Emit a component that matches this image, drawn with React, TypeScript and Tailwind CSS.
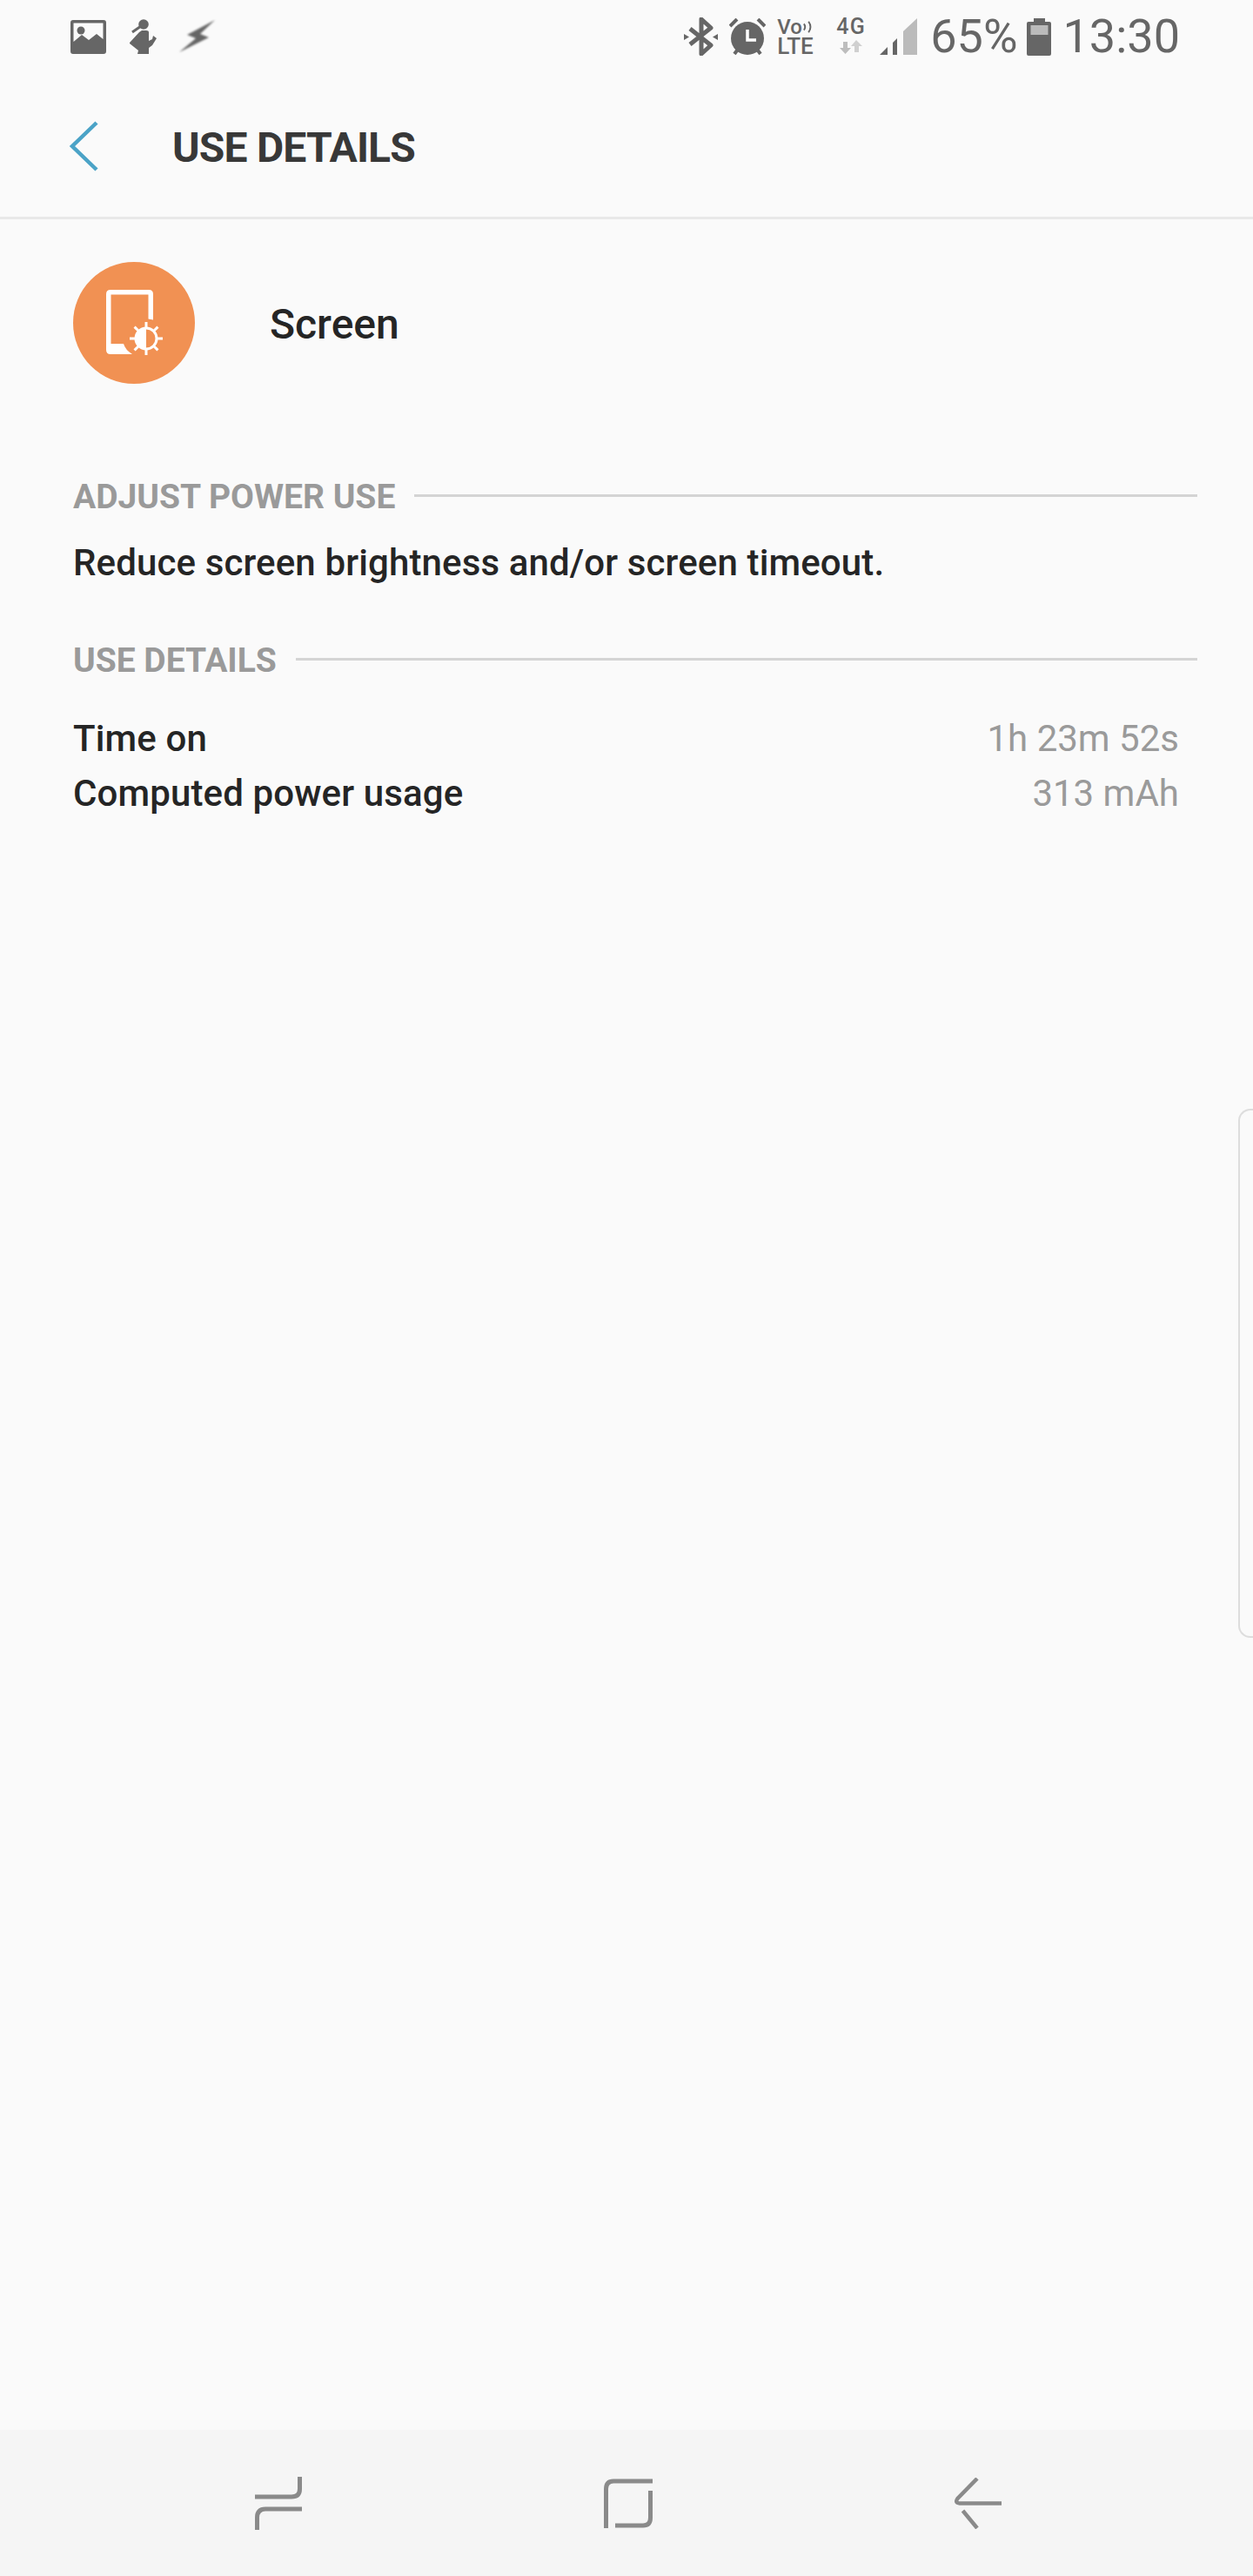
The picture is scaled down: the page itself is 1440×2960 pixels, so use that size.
const roboto = "font-['Roboto',sans-serif]";

function PictureIcon() {
    return (
        <svg width="41" height="39" viewBox="0 0 41 39" className="block">
            <path
                fillRule="evenodd"
                fill="#666"
                d="M3 0H38Q41 0 41 3V36Q41 39 38 39H3Q0 39 0 36V3Q0 0 3 0ZM3.5 3.5V25L13 17L21 23L30 16L37.5 22V3.5Z"
            />
            <circle cx="12" cy="12" r="4.5" fill="#666" />
        </svg>
    );
}

function FitnessIcon() {
    return (
        <svg width="32" height="40" viewBox="0 0 32 40" className="block">
            <circle cx="17" cy="6" r="5.8" fill="#666" />
            <path d="M14 8L4 15" fill="none" stroke="#666" strokeWidth="3" />
            <path
                fill="#666"
                d="M12 15L1 27V28L11 36L10 40H23V33L27 30L32 22L28 19L27 23L23 25V15Q23 13 20 13H15Z"
            />
        </svg>
    );
}

function BoltIcon() {
    return (
        <svg width="42" height="38" viewBox="0 0 42 38" className="block blur-[1px]">
            <path fill="#666" d="M41 0L9 17L19 21L0 37L34 20L24 16Z" />
        </svg>
    );
}

function BluetoothIcon() {
    return (
        <svg width="39" height="44" viewBox="0 0 39 44" className="block">
            <path
                d="M7 13L31 32L20 42V2L31 12L7 31"
                fill="none"
                stroke="#666"
                strokeWidth="5"
                strokeLinejoin="round"
            />
            <path fill="#666" d="M0 19L6 22.5L0 26ZM39 19L33 22.5L39 26Z" />
        </svg>
    );
}

function AlarmIcon() {
    return (
        <svg width="42" height="43" viewBox="0 0 42 43" className="block">
            <circle cx="21" cy="23" r="19" fill="#666" />
            <path d="M21 13V25H31" fill="none" stroke="#fff" strokeWidth="3.5" />
            <path d="M1 9L9 1M33 1L41 9M6 41L9 37M36 41L33 37" stroke="#666" strokeWidth="4" />
        </svg>
    );
}

function VolteIcon() {
    return (
        <div className="flex flex-col w-[42px] text-[#666]">
            <div className="flex items-center h-[18px] mb-[5px]">
                <span className="text-[24px] leading-[18px] font-medium">Vo</span>
                <svg width="14" height="18" viewBox="0 0 14 18" className="block ml-[1px]">
                    <path
                        d="M1 5Q4 9 1 13M7 2Q12 9 7 16"
                        fill="none"
                        stroke="#666"
                        strokeWidth="2.2"
                    />
                </svg>
            </div>
            <span className="text-[26px] leading-[17px] font-medium">LTE</span>
        </div>
    );
}

function NetworkIcon() {
    return (
        <div className="flex flex-col items-center w-[34px] text-[#666]">
            <span className="text-[25px] leading-[17px] font-medium tracking-[1.5px] mb-[7px]">4G</span>
            <svg width="26" height="16" viewBox="0 0 26 16" className="block">
                <path fill="#bdbdbd" d="M4 2H9V9H13L6.5 16L0 9H4Z" />
                <path fill="#d0d0d0" d="M19 0L26 7H22V14H17V7H13Z" />
            </svg>
        </div>
    );
}

function SignalIcon() {
    return (
        <svg width="43" height="42" viewBox="0 0 43 42" className="block">
            <path fill="#666" d="M0 42L9 33V42ZM15 42V28L20 23V42Z" />
            <path fill="#bbb" d="M27 42V15L43 0V42Z" />
        </svg>
    );
}

function BatteryIcon() {
    return (
        <svg width="28" height="43" viewBox="0 0 28 43" className="block">
            <path
                fill="#666"
                d="M8 0H21V4H26Q28 4 28 6V41Q28 43 26 43H2Q0 43 0 41V6Q0 4 2 4H8Z"
            />
            <rect x="4.5" y="8" width="20" height="11" fill="#bbb" />
        </svg>
    );
}

function ScreenIcon() {
    const rays = [0, 45, 90, 135, 180, 225, 270, 315];

    return (
        <svg width="140" height="140" viewBox="0 0 140 140" className="block">
            <path
                fill="#fff"
                d="M92 66.5V37Q92 32 87 32H43Q38 32 38 37V101Q38 106 43 106H68Q60 101 58 94H43.5V37.5H86.5V65.5Z"
            />
            {rays.map((angle) => (
                <rect
                    key={angle}
                    x="82.5"
                    y="69"
                    width="3"
                    height="8"
                    fill="#fff"
                    transform={`rotate(${angle} 84 88)`}
                />
            ))}
            <circle cx="84" cy="88" r="12" fill="#f19153" stroke="#fff" strokeWidth="3" />
            <path fill="#fff" d="M84 76A12 12 0 0 0 84 100Z" />
        </svg>
    );
}

function SectionHeader({ title }: { title: string }) {
    return (
        <div className="flex items-center h-[40px] pr-[64px]">
            <span className="text-[39px] leading-[40px] font-bold text-[#9a9a9a] whitespace-nowrap">{title}</span>
            <div className="flex-1 h-[3px] ml-[22px] mb-[3px] bg-[#d4d4d4]" />
        </div>
    );
}

function DetailRow({ label, value }: { label: string; value: string }) {
    return (
        <div className="flex justify-between items-center h-[63px] pr-[85px]">
            <span className="text-[42px] leading-[50px] font-medium tracking-[0.13px] text-[#252525]">{label}</span>
            <span className="text-[42px] leading-[50px] text-[#9a9a9a]">{value}</span>
        </div>
    );
}

export default function App() {
    return (
        <div className={`relative flex flex-col w-[1440px] h-[2960px] bg-[#fafafa] ${roboto}`}>
            <div className="flex items-center justify-between h-[84px] pl-[81px] pr-[84px]">
                <div className="flex items-center gap-[26px]">
                    <PictureIcon />
                    <FitnessIcon />
                    <BoltIcon />
                </div>
                <div className="flex items-center">
                    <BluetoothIcon />
                    <div className="ml-[13px]"><AlarmIcon /></div>
                    <div className="ml-[13px]"><VolteIcon /></div>
                    <div className="ml-[26px]"><NetworkIcon /></div>
                    <div className="ml-[16px]"><SignalIcon /></div>
                    <span className="ml-[15px] text-[54px] leading-[50px] text-[#666]">65%</span>
                    <div className="ml-[10px]"><BatteryIcon /></div>
                    <span className="ml-[14px] text-[54px] leading-[50px] text-[#666]">13:30</span>
                </div>
            </div>

            <div className="flex items-center h-[162px] pt-[3px] border-b-[3px] border-[#e8e8e8] box-content pl-[79px]">
                <svg width="34" height="58" viewBox="0 0 34 58" className="block">
                    <path d="M32 2L4 29L32 56" fill="none" stroke="#4ba3c7" strokeWidth="4.5" />
                </svg>
                <h1 className="ml-[85px] mt-[4px] text-[48px] leading-[56px] font-bold tracking-[-0.8px] text-[#383838]">USE DETAILS</h1>
            </div>

            <div className="flex-1 pl-[84px] pt-[49px]">
                <div className="flex items-center">
                    <div className="w-[140px] h-[140px] rounded-full bg-[#f19153]">
                        <ScreenIcon />
                    </div>
                    <span className="ml-[86px] mt-[3px] text-[48px] leading-[56px] font-medium text-[#252525]">Screen</span>
                </div>

                <div className="mt-[110px]">
                    <SectionHeader title="ADJUST POWER USE" />
                </div>
                <p className="mt-[31px] text-[42px] leading-[50px] font-medium tracking-[0.13px] text-[#252525]">
                    Reduce screen brightness and/or screen timeout.
                </p>

                <div className="mt-[67px]">
                    <SectionHeader title="USE DETAILS" />
                </div>
                <div className="mt-[38px]">
                    <DetailRow label="Time on" value="1h 23m 52s" />
                    <DetailRow label="Computed power usage" value="313 mAh" />
                </div>
            </div>

            <div className="flex items-center justify-between h-[168px] pl-[293px] pr-[289px] bg-[#f5f5f5]">
                <svg width="54" height="61" viewBox="0 0 54 61" className="block">
                    <path
                        d="M51.5 0V14Q51.5 23 42 23H0M54 37H12Q2.5 37 2.5 47V61"
                        fill="none"
                        stroke="#8a8a8a"
                        strokeWidth="5"
                    />
                </svg>
                <svg width="56" height="57" viewBox="0 0 56 57" className="block">
                    <path
                        d="M56 3H11Q2.5 3 2.5 12V57M53.5 14V45Q53.5 54 45 54H13"
                        fill="none"
                        stroke="#8a8a8a"
                        strokeWidth="5"
                    />
                </svg>
                <svg width="54" height="59" viewBox="0 0 54 59" className="block">
                    <path
                        d="M26 1L3.5 24Q0 29 6 29.5H54M9.5 38L26 58"
                        fill="none"
                        stroke="#8a8a8a"
                        strokeWidth="4.5"
                    />
                </svg>
            </div>

            {/* edge panel handle */}
            <div className="absolute right-0 top-[1274px] w-[17px] h-[608px] border-2 border-r-0 border-[#dddddd] rounded-l-[14px]" />
        </div>
    );
}
